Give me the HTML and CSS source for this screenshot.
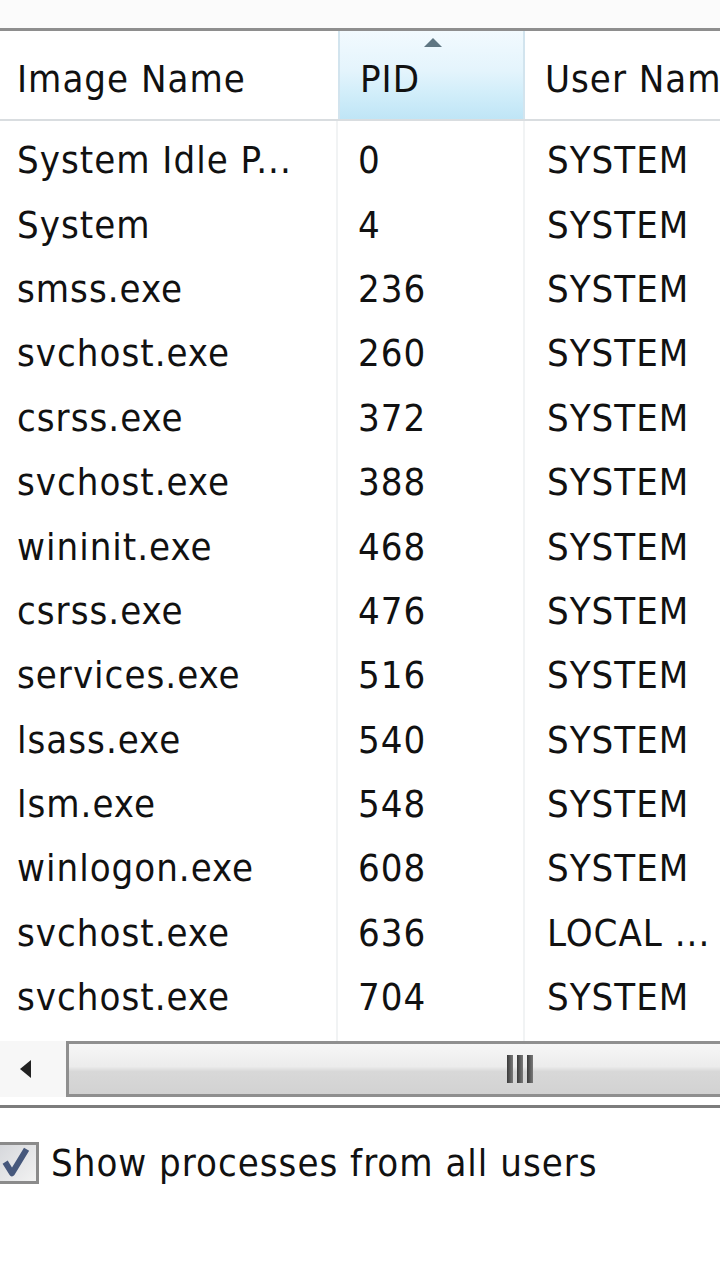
FILE: index.html
```html
<!DOCTYPE html>
<html>
<head>
<meta charset="utf-8">
<link rel="stylesheet" href="styles.css">
</head>
<body>
<div class="window">
  <div class="topgap"></div>
  <div class="list">
    <div class="header">
      <div class="hcell c1">Image Name</div>
      <div class="hcell c2 sorted"><span class="arrow"></span>PID</div>
      <div class="hcell c3">User Nam</div>
    </div>
    <div class="body">
      <div class="row"><div class="cell c1">System Idle P...</div><div class="cell c2">0</div><div class="cell c3">SYSTEM</div></div>
      <div class="row"><div class="cell c1">System</div><div class="cell c2">4</div><div class="cell c3">SYSTEM</div></div>
      <div class="row"><div class="cell c1">smss.exe</div><div class="cell c2">236</div><div class="cell c3">SYSTEM</div></div>
      <div class="row"><div class="cell c1">svchost.exe</div><div class="cell c2">260</div><div class="cell c3">SYSTEM</div></div>
      <div class="row"><div class="cell c1">csrss.exe</div><div class="cell c2">372</div><div class="cell c3">SYSTEM</div></div>
      <div class="row"><div class="cell c1">svchost.exe</div><div class="cell c2">388</div><div class="cell c3">SYSTEM</div></div>
      <div class="row"><div class="cell c1">wininit.exe</div><div class="cell c2">468</div><div class="cell c3">SYSTEM</div></div>
      <div class="row"><div class="cell c1">csrss.exe</div><div class="cell c2">476</div><div class="cell c3">SYSTEM</div></div>
      <div class="row"><div class="cell c1">services.exe</div><div class="cell c2">516</div><div class="cell c3">SYSTEM</div></div>
      <div class="row"><div class="cell c1">lsass.exe</div><div class="cell c2">540</div><div class="cell c3">SYSTEM</div></div>
      <div class="row"><div class="cell c1">lsm.exe</div><div class="cell c2">548</div><div class="cell c3">SYSTEM</div></div>
      <div class="row"><div class="cell c1">winlogon.exe</div><div class="cell c2">608</div><div class="cell c3">SYSTEM</div></div>
      <div class="row"><div class="cell c1">svchost.exe</div><div class="cell c2">636</div><div class="cell c3">LOCAL ...</div></div>
      <div class="row"><div class="cell c1">svchost.exe</div><div class="cell c2">704</div><div class="cell c3">SYSTEM</div></div>
    </div>
    <div class="hscroll">
      <div class="sbtn"><span class="larrow"></span></div>
      <div class="thumb"><span class="grip"><i></i><i></i><i></i></span></div>
    </div>
  </div>
  <div class="footer">
    <span class="check">
      <svg width="42" height="42" viewBox="0 0 42 42">
        <path d="M6 20 L14 33 L31 5" fill="none" stroke="#46587c" stroke-width="7" stroke-linejoin="round"/>
      </svg>
    </span>
    <span class="label">Show processes from all users</span>
  </div>
</div>
</body>
</html>
```
FILE: styles.css
```css
html, body {
  margin: 0;
  padding: 0;
  background: #ffffff;
}
body {
  width: 720px;
  height: 1269px;
  overflow: hidden;
  font-family: "DejaVu Sans Condensed", "DejaVu Sans", sans-serif;
  font-stretch: condensed;
  font-size: 38px;
  letter-spacing: 1px;
  color: #111111;
}
.window {
  display: flex;
  flex-direction: column;
}
.topgap {
  height: 28px;
  background: #fbfbfb;
}
.list {
  border-top: 3px solid #8e8e8e;
  border-bottom: 3px solid #7c7c7c;
  display: flex;
  flex-direction: column;
}
.header {
  display: flex;
  height: 88px;
  border-bottom: 2px solid #d9dde0;
  background: #ffffff;
}
.hcell {
  display: flex;
  align-items: center;
  padding-left: 17px;
  box-sizing: border-box;
  position: relative;
  padding-top: 8px;
}
.c1 { width: 338px; flex: none; }
.c2 { width: 187px; flex: none; padding-left: 20px; }
.c3 { flex: 1; padding-left: 22px; white-space: nowrap; overflow: hidden; }
.header .c2 { border-left: 2px solid #d2e4ee; border-right: 2px solid #d2e4ee; }
.header .c3 { padding-left: 20px; }
.sorted {
  background: linear-gradient(#f2fafe 0%, #e4f4fc 45%, #d2eefa 70%, #bfe5f6 100%);
}
.arrow {
  position: absolute;
  left: 84px;
  top: 7px;
  width: 0;
  height: 0;
  border-left: 9px solid transparent;
  border-right: 9px solid transparent;
  border-bottom: 9px solid #5f7682;
}
.body {
  padding-top: 7px;
  padding-bottom: 12px;
  background: linear-gradient(to right, transparent 336px, #f1f3f4 336px, #f1f3f4 338px, transparent 338px, transparent 523px, #f1f3f4 523px, #f1f3f4 525px, transparent 525px);
}
.row {
  display: flex;
  height: 64.4px;
  align-items: center;
}
.cell {
  box-sizing: border-box;
  padding-left: 17px;
  white-space: nowrap;
}
.body .c2 { padding-left: 20px; }
.body .c3 { padding-left: 22px; }
.hscroll {
  display: flex;
  height: 56px;
  margin-bottom: 8px;
}
.sbtn {
  width: 66px;
  flex: none;
  background: #f7f7f7;
  display: flex;
  align-items: center;
  padding-left: 20px;
  box-sizing: border-box;
}
.larrow {
  width: 0;
  height: 0;
  border-top: 9px solid transparent;
  border-bottom: 9px solid transparent;
  border-right: 11px solid #222;
}
.thumb {
  flex: 1;
  border: 3px solid #8f8f8f;
  border-right: none;
  background: linear-gradient(#f6f6f6 0%, #ececec 45%, #d8d8d8 55%, #d2d2d2 100%);
  display: flex;
  align-items: center;
  padding-left: 438px;
}
.grip {
  display: flex;
  gap: 4px;
}
.grip i {
  display: block;
  width: 6px;
  height: 28px;
  background: linear-gradient(to right, #3a3a3a, #7a7a7a);
}
.footer {
  display: flex;
  align-items: center;
  height: 110px;
}
.check {
  width: 42px;
  height: 42px;
  margin-left: -3px;
  border: 3px solid #8b8b8b;
  background: linear-gradient(135deg, #d6d8dc, #f2f2f2);
  box-sizing: border-box;
  display: flex;
  align-items: center;
  justify-content: center;
  overflow: hidden;
  flex: none;
}
.label {
  margin-left: 12px;
  color: #111;
}
```
